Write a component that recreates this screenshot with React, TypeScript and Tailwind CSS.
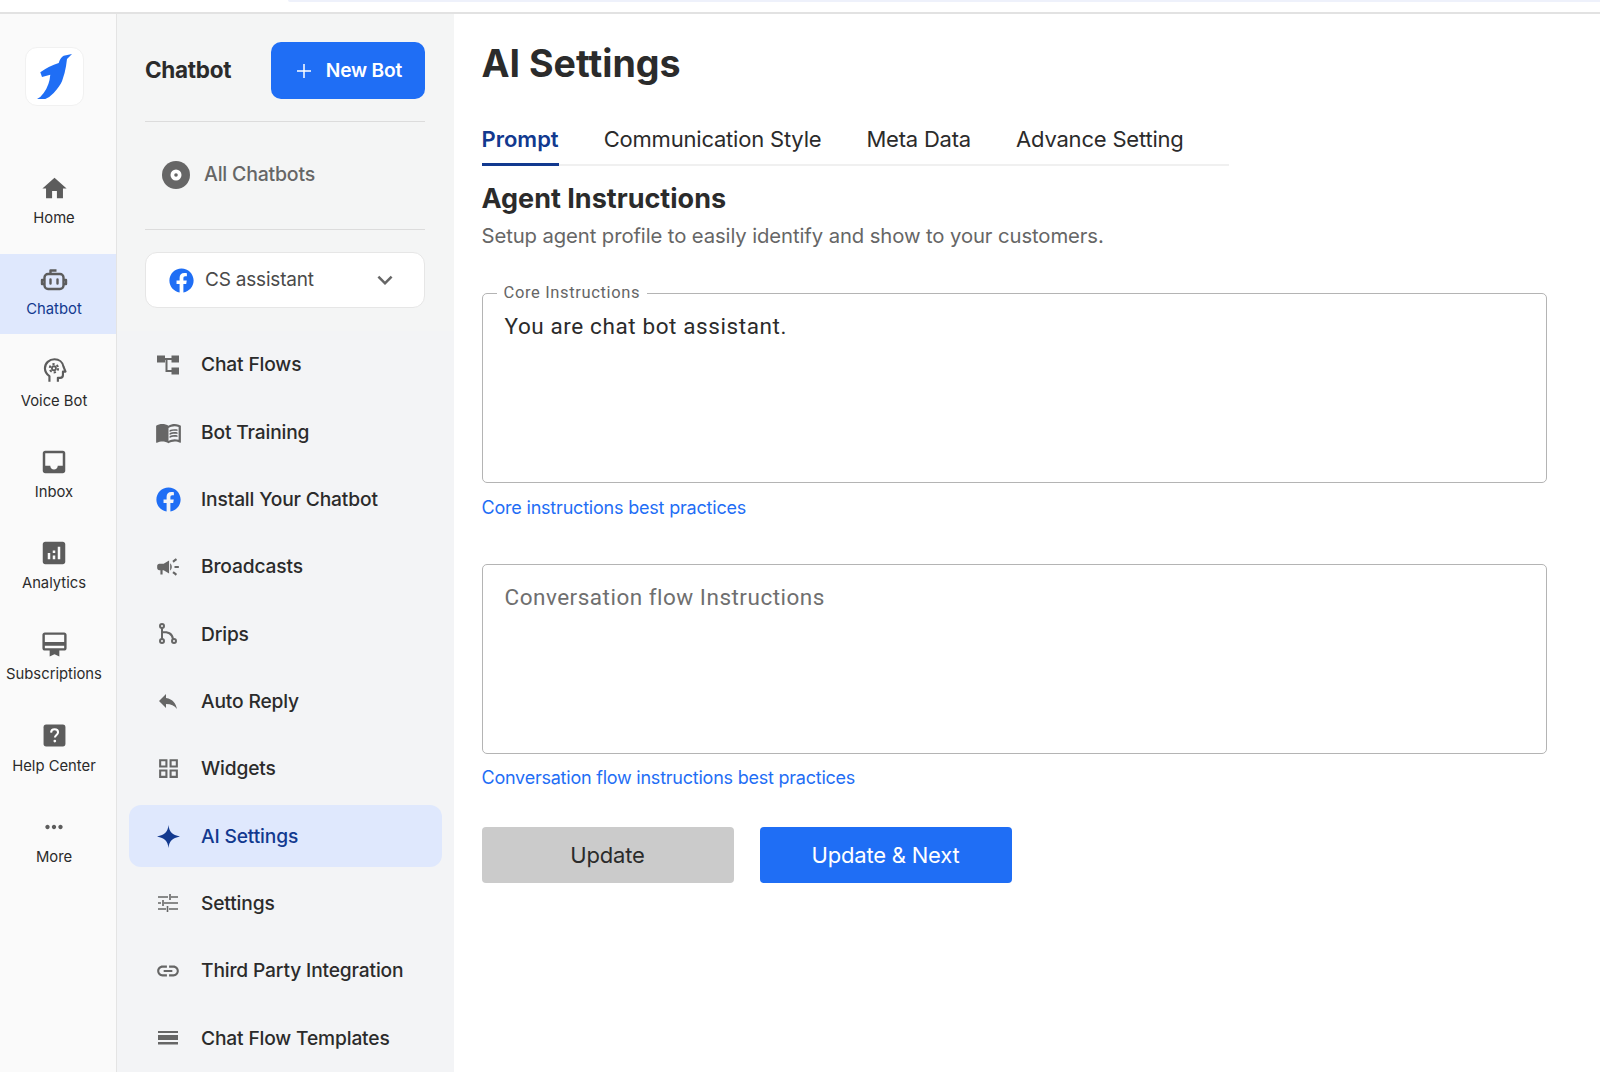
import type { ReactNode } from 'react';
import { FaFacebook } from 'react-icons/fa';
import {
  MdAnalytics,
  MdCampaign,
  MdCardMembership,
  MdHome,
  MdInbox,
  MdKeyboardArrowDown,
  MdLink,
  MdMenuBook,
  MdMoreHoriz,
  MdOutlineGridView,
  MdReply,
} from 'react-icons/md';

function BotIcon() {
  return (
    <svg viewBox="0 -2 28 28" className="h-[28px] w-[28px]" fill="none" stroke="currentColor" strokeWidth="2.4">
      <path d="M10.500 7V3.500h6" strokeLinejoin="round" />
      <rect x="4.500" y="7" width="19" height="15" rx="3.500" />
      <path d="M4.500 13H2v4h2.500M23.500 13H26v4h-2.500" strokeLinejoin="round" />
      <path d="M10.500 12.500v4M17.500 12.500v4" strokeLinecap="round" />
    </svg>
  );
}

function VoiceIcon() {
  return (
    <svg viewBox="0 0 24 24" className="h-[27px] w-[27px]" fill="none" stroke="currentColor" strokeWidth="1.900">
      <path d="M7.500 22v-5C5 15.300 3.500 12.800 3.500 10 3.500 5.500 7.300 2 12 2c4 0 7.300 2.500 8 6.500l1.800 4.500h-2.300v3c0 1.500-1 2.500-2.500 2.500H15V22" strokeLinejoin="round" />
      <circle cx="11.500" cy="10" r="1.800" strokeWidth="1.600" />
      <circle cx="11.500" cy="10" r="3.700" strokeWidth="1.800" strokeDasharray="2 1.900" />
    </svg>
  );
}

function HelpIcon() {
  return (
    <svg viewBox="0 0 24 24" className="h-[25px] w-[25px]">
      <rect x="1.500" y="1.500" width="21" height="21" rx="2.500" fill="currentColor" />
      <path d="M8.700 9.200c.1-2 1.500-3.200 3.400-3.200 2 0 3.300 1.200 3.300 2.900 0 2.500-3 2.600-3 5" fill="none" stroke="white" strokeWidth="2" />
      <circle cx="12.300" cy="17.300" r="1.300" fill="white" />
    </svg>
  );
}

function FlowIcon() {
  return (
    <svg viewBox="0 0 22 20" className="h-[20px] w-[22px]" fill="currentColor">
      <rect x="0" y="0.500" width="8" height="7" />
      <rect x="14.500" y="0.500" width="7.500" height="7" />
      <rect x="14.500" y="12.500" width="7.500" height="7" />
      <path d="M8 3h7v2h-4.500v10h4.500v2h-6.500V5H8z" />
    </svg>
  );
}

function DripsIcon() {
  return (
    <svg viewBox="0 0 20 22" className="h-[22px] w-[20px]" fill="none" stroke="currentColor" strokeWidth="2">
      <circle cx="4" cy="3" r="2" />
      <circle cx="4" cy="18" r="2" />
      <circle cx="16" cy="18" r="2" />
      <path d="M4 5v11M4 9c6 0 10 1 11 7" />
    </svg>
  );
}

function TuneIcon() {
  return (
    <svg viewBox="0 0 20 20" className="h-[20px] w-[20px]" fill="none" stroke="currentColor" strokeWidth="1.600">
      <path d="M0 4h10M13 4h7M12 1v6M0 10h3M6 10h14M5 7v6M0 16h8M11 16h9M9.500 13v6" />
    </svg>
  );
}

function StarIcon() {
  return (
    <svg viewBox="0 0 22 22" className="h-[23px] w-[23px]" fill="currentColor">
      <path d="M11 0c.7 6.500 3.500 9.600 11 11-7.500 1.400-10.300 4.500-11 11-.7-6.500-3.500-9.600-11-11 7.500-1.400 10.300-4.500 11-11z" />
    </svg>
  );
}

function TemplatesIcon() {
  return (
    <svg viewBox="0 0 20 14" className="h-[14px] w-[20px]" fill="currentColor">
      <rect width="20" height="2" />
      <rect y="4" width="20" height="5" />
      <rect y="11" width="20" height="2.500" />
    </svg>
  );
}

function DiscIcon() {
  return (
    <svg viewBox="0 0 28 28" className="h-[28px] w-[28px]">
      <circle cx="14" cy="14" r="14" fill="#666666" />
      <circle cx="14" cy="14" r="5.500" fill="white" />
      <circle cx="14" cy="14" r="1.800" fill="#666666" />
    </svg>
  );
}

function Logo() {
  return (
    <svg viewBox="0 0 36 47" className="h-[47px] w-[36px]" fill="#1f6ef5">
      <path d="M35 1 L26.700 2.700 Q23 5 21.700 10 Q12 13 3.300 19.300 L5 24 L13.300 21.700 Q12.500 32 6.700 40 Q4 44 0 46 L8.300 46 Q13 44 16.700 40 Q23 33 25 28.300 Q28 20 29 13.300 L30 6 Z" />
    </svg>
  );
}

const railItems: { label: string; icon: ReactNode; active?: boolean }[] = [
  { label: 'Home', icon: <MdHome size={29} /> },
  { label: 'Chatbot', icon: <BotIcon />, active: true },
  { label: 'Voice Bot', icon: <VoiceIcon /> },
  { label: 'Inbox', icon: <MdInbox size={30} /> },
  { label: 'Analytics', icon: <MdAnalytics size={30} /> },
  { label: 'Subscriptions', icon: <MdCardMembership size={29} /> },
  { label: 'Help Center', icon: <HelpIcon /> },
  { label: 'More', icon: <MdMoreHoriz size={26} /> },
];

const navItems: { label: string; icon: ReactNode; active?: boolean }[] = [
  { label: 'Chat Flows', icon: <FlowIcon /> },
  { label: 'Bot Training', icon: <MdMenuBook size={27} /> },
  { label: 'Install Your Chatbot', icon: <FaFacebook size={25} className="text-[#1f6ef5]" /> },
  { label: 'Broadcasts', icon: <MdCampaign size={26} /> },
  { label: 'Drips', icon: <DripsIcon /> },
  { label: 'Auto Reply', icon: <MdReply size={24} /> },
  { label: 'Widgets', icon: <MdOutlineGridView size={25} /> },
  { label: 'AI Settings', icon: <StarIcon />, active: true },
  { label: 'Settings', icon: <TuneIcon /> },
  { label: 'Third Party Integration', icon: <MdLink size={26} /> },
  { label: 'Chat Flow Templates', icon: <TemplatesIcon /> },
];

const tabs = ['Communication Style', 'Meta Data', 'Advance Setting'];

export default function App() {
  return (
    <div className="flex h-[1072px] flex-col overflow-hidden bg-white font-['Inter',sans-serif] text-[#2b2b2b]">
      {/* Top strip */}
      <div className="h-[14px] shrink-0 border-b-2 border-[#e2e2e2] pl-[288px]">
        <div className="h-[2px] rounded-bl bg-[#eef1fb]" />
      </div>

      <div className="flex min-h-0 flex-1">
        {/* Icon rail */}
        <aside className="flex w-[117px] shrink-0 flex-col border-r border-[#e4e4e4] bg-[#fafafa] pt-[33px]">
          <div className="mb-[57px] ml-[25px] flex h-[59px] w-[59px] items-center justify-center rounded-[12px] border border-[#f1f1f1] bg-white">
            <Logo />
          </div>
          <div className="flex flex-col gap-[11.250px]">
            {railItems.map((item) => (
              <div
                key={item.label}
                className={`flex h-[80px] flex-col items-center pr-[8px] pt-[10px] ${item.active ? 'bg-[#dfe8fd] text-[#12398f]' : ''}`}
              >
                <div className="flex h-[30px] items-center justify-center text-[#5c5c5c]">{item.icon}</div>
                <span className="mt-[5px] whitespace-nowrap text-[14.800px] leading-[20px]">{item.label}</span>
              </div>
            ))}
          </div>
        </aside>

        {/* Section panel */}
        <aside className="flex w-[337px] shrink-0 flex-col bg-[#f3f4f6]">
          <div className="bg-[#f4f5f5] pb-[23px] pl-[28px] pr-[29px] pt-[28px]">
            <div className="flex items-center justify-between border-b border-[#dcdcdc] pb-[22px]">
              <h2 className="-mt-[1px] text-[22.500px] font-bold tracking-[-0.3px]">Chatbot</h2>
              <button className="flex h-[57px] w-[154px] items-center justify-center gap-[15px] rounded-[10px] bg-[#1f6ef5] pl-[3px] text-[19.200px] font-semibold tracking-[-0.2px] text-white">
                <svg viewBox="0 0 14 14" className="h-[14px] w-[14px]" fill="none" stroke="white" strokeWidth="1.500">
                  <path d="M7 0v14M0 7h14" />
                </svg>
                New Bot
              </button>
            </div>
            <div className="flex h-[108px] items-center gap-[14px] border-b border-[#dcdcdc] pb-[2px] pl-[17px]">
              <DiscIcon />
              <span className="text-[19.500px] font-medium tracking-[-0.2px] text-[#666666]">All Chatbots</span>
            </div>
            <div className="mt-[22px] flex h-[56px] items-center rounded-[12px] border border-[#e6e6e6] bg-white pl-[23px] pr-[32px]">
              <FaFacebook size={25} className="text-[#1f6ef5]" />
              <span className="ml-[11px] text-[19px] tracking-[-0.2px] text-[#4a4a4a]">CS assistant</span>
              <MdKeyboardArrowDown size={30} className="ml-auto -mr-[8px] text-[#666666]" />
            </div>
          </div>

          <nav className="flex flex-col px-[12px]">
            {navItems.map((item) => (
              <div
                key={item.label}
                className={`flex h-[67.350px] items-center ${item.active ? 'text-[#12398f]' : ''}`}
              >
                <div className={`flex w-full items-center rounded-[12px] ${item.active ? 'h-[62px] bg-[#dfe8fd]' : ''}`}>
                  <div className={`flex w-[72px] justify-center pl-[6px] ${item.active ? 'text-[#12398f]' : 'text-[#666666]'}`}>
                    {item.icon}
                  </div>
                  <span className="whitespace-nowrap text-[19.200px] font-medium tracking-[-0.15px]">{item.label}</span>
                </div>
              </div>
            ))}
          </nav>
        </aside>

        {/* Main */}
        <main className="min-w-0 flex-1 pl-[27.500px] pr-[53px] pt-[24px]">
          <h1 className="text-[37.600px] font-bold leading-[52px]">AI Settings</h1>

          <div className="mt-[33px] flex h-[43px] w-[747px] gap-[45px] border-b-2 border-[#f0f0f0] text-[22px] tracking-[-0.2px]">
            <div className="-mb-[2px] border-b-[3px] border-[#12398f] font-semibold tracking-[0px] text-[#12398f]">Prompt</div>
            {tabs.map((tab) => (
              <div key={tab}>{tab}</div>
            ))}
          </div>

          <h3 className="mt-[15px] text-[27px] font-bold leading-[36px]">Agent Instructions</h3>
          <p className="mt-[5px] text-[20.300px] leading-[28px] tracking-[-0.1px] text-[#666666]">
            Setup agent profile to easily identify and show to your customers.
          </p>

          <div className="relative mt-[43px]">
            <span className="absolute -top-[10px] left-[15px] bg-white px-[7px] font-['Roboto',sans-serif] text-[16.500px] leading-[20px] tracking-[0.65px] text-[#666666]">
              Core Instructions
            </span>
            <textarea
              readOnly
              defaultValue="You are chat bot assistant."
              className="block h-[190px] w-full resize-none rounded-[5px] border border-[#b4b4b4] px-[22px] pt-[16px] font-['Roboto',sans-serif] text-[22.500px] leading-[32px] tracking-[0.6px] text-[#2b2b2b] outline-none"
            />
          </div>
          <a className="mt-[13px] block text-[18px] leading-[24px] tracking-[-0.2px] text-[#1f6ef5]">Core instructions best practices</a>

          <textarea
            readOnly
            placeholder="Conversation flow Instructions"
            className="mt-[44px] block h-[190px] w-full resize-none rounded-[5px] border border-[#b4b4b4] px-[22px] pt-[16px] font-['Roboto',sans-serif] text-[22.500px] leading-[32px] tracking-[0.5px] outline-none placeholder:text-[#6f6f6f]"
          />
          <a className="mt-[12px] block text-[18px] leading-[24px] tracking-[-0.23px] text-[#1f6ef5]">
            Conversation flow instructions best practices
          </a>

          <div className="mt-[37px] flex gap-[26px]">
            <button className="h-[56px] w-[252px] rounded-[4px] bg-[#cbcbcb] text-[22px] tracking-[-0.2px] text-[#2b2b2b]">Update</button>
            <button className="h-[56px] w-[252px] rounded-[4px] bg-[#1f6ef5] text-[22px] tracking-[-0.2px] text-white">Update &amp; Next</button>
          </div>
        </main>
      </div>
    </div>
  );
}
